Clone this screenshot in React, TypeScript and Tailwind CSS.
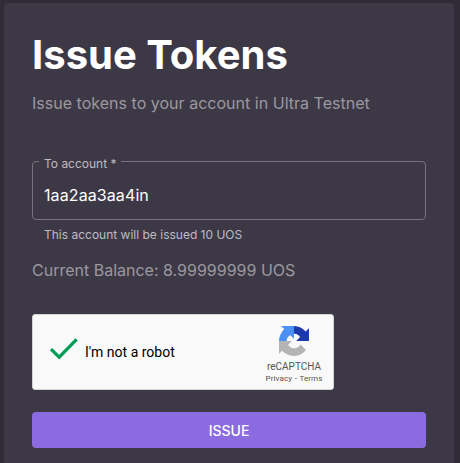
function RecaptchaLogo() {
  return (
    <svg viewBox="0 0 64 64" className="block h-[30px] w-[30px]">
      <path fill="#1c3aa9" d="M64 31.955l-.033-1.37V4.687l-7.16 7.16C50.948 4.674 42.033.093 32.05.093c-10.4 0-19.622 4.96-25.458 12.64l11.736 11.86a15.55 15.55 0 0 1 4.754-5.334c2.05-1.6 4.952-2.906 8.968-2.906.485 0 .86.057 1.135.163 4.976.393 9.288 3.14 11.828 7.124l-8.307 8.307L64 31.953" />
      <path fill="#4a90f5" d="M31.862.094l-1.37.033H4.594l7.16 7.16C4.58 13.147 0 22.06 0 32.046c0 10.4 4.96 19.622 12.64 25.458L24.5 45.768a15.55 15.55 0 0 1-5.334-4.754c-1.6-2.05-2.906-4.952-2.906-8.968 0-.485.057-.86.163-1.135.393-4.976 3.14-9.288 7.124-11.828l8.307 8.307L31.86.095" />
      <path fill="#b4b4b4" d="M.001 32.045l.033 1.37v25.898l7.16-7.16c5.86 7.173 14.774 11.754 24.76 11.754 10.4 0 19.622-4.96 25.458-12.64l-11.736-11.86a15.55 15.55 0 0 1-4.754 5.334c-2.05 1.6-4.952 2.906-8.968 2.906-.485 0-.86-.057-1.135-.163-4.976-.393-9.288-3.14-11.828-7.124l8.307-8.307c-10.522.04-22.4.066-27.295-.005" />
    </svg>
  );
}

function Recaptcha() {
  return (
    <div className="mt-8 flex h-[76px] w-[302px] rounded-[3px] border border-[#d3d3d3] bg-[#f9f9f9] font-['Roboto',sans-serif]">
      <svg viewBox="0 0 30 24" className="mt-[22px] ml-4 h-6 w-[30px] shrink-0" fill="none">
        <path d="M2 12.2l8.2 8L27.6 2.4" stroke="#009e55" strokeWidth="3.2" />
      </svg>
      <span className="mt-[29px] ml-[6px] text-[14px] leading-[17px] text-black">I'm not a robot</span>
      <div className="ml-auto flex w-[78px] flex-col items-center pt-[11px]">
        <RecaptchaLogo />
        <span className="mt-[5px] text-[10px] leading-[12px] text-[#555]">reCAPTCHA</span>
        <span className="mt-[1px] text-[8px] leading-[10px] tracking-[0.1px] whitespace-nowrap text-[#555]">
          Privacy <span className="px-[0.5px]">-</span> Terms
        </span>
      </div>
    </div>
  );
}

export default function App() {
  return (
    <main className="h-[463px] w-[460px] overflow-hidden bg-[#2f2b37] pt-[3px] pl-1 font-['Inter',sans-serif]">
      <section className="h-[460px] w-[450px] rounded-t-[4px] bg-[#3d3846] px-7 pt-7">
        <h1 className="text-[40px] leading-[48px] font-bold text-white">Issue Tokens</h1>
        <p className="mt-[12px] text-[16px] leading-6 tracking-[0.02px] text-[#9b989f]">Issue tokens to your account in Ultra Testnet</p>
        <fieldset className="mt-[38px] h-[67px] rounded-[4px] border border-[#77737d] pl-[6px]">
          <legend className="h-4 pr-1 pl-[5px] text-[12px] leading-[22px] text-[#bebcc2]">To account *</legend>
          <input
            className="mt-[14px] block h-6 w-full bg-transparent pl-[5px] text-[16px] tracking-[0.1px] text-white outline-none"
            defaultValue="1aa2aa3aa4in"
          />
        </fieldset>
        <p className="mt-[5px] ml-3 text-[12px] leading-5 text-[#bebcc2]">This account will be issued 10 UOS</p>
        <p className="mt-[13px] text-[16px] leading-6 text-[#9b989f]">Current Balance: 8.99999999 UOS</p>
        <Recaptcha />
        <button className="mt-[22px] block h-9 w-full rounded-[4px] bg-[#8a6ce0] text-[14px] font-medium text-white">ISSUE</button>
      </section>
    </main>
  );
}
